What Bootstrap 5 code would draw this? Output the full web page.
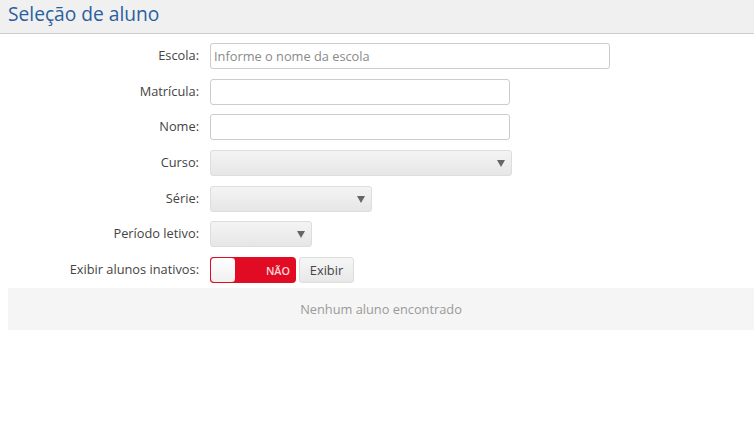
<!DOCTYPE html>
<html lang="pt-BR">
<head>
<meta charset="utf-8">
<title>Seleção de aluno</title>
<link href="https://cdn.jsdelivr.net/npm/bootstrap@5.3.0/dist/css/bootstrap.min.css" rel="stylesheet">
<style>
body { font-family: "Open Sans", sans-serif; font-size: 12.8px; color: #444; background: #fff; }
.page-head { height: 34px; background: #f0f0f0; border-bottom: 1px solid #ccc; padding: 0 8px; }
.page-head h1 { font-size: 19.2px; line-height: 28px; font-weight: 400; color: #2a5f9e; margin: 0; }
.form-stack { display: flex; flex-direction: column; gap: 9.67px; padding-top: 9px; }
.form-line { display: flex; align-items: center; height: 26px; }
.form-line label { width: 199px; text-align: right; margin: 0 11px 0 0; line-height: 25px; height: 26px; flex: none; }
.field { height: 26px; min-height: 26px; padding: 2px 3px; font-size: 12.8px; color: #444; border: 1px solid #ccc; border-radius: 3px; box-shadow: none; }
.field::placeholder { color: #8a8a8a; }
.w-400 { width: 400px; }
.w-300 { width: 300px; }
.pick { appearance: none; border: 1px solid #ddd; background-color: #eee; background-image: linear-gradient(#f4f4f4, #e6e6e6); position: relative; }
.pick::after { content: ""; position: absolute; right: 6px; top: 9px; border-left: 4.5px solid transparent; border-right: 4.5px solid transparent; border-top: 7px solid #666; }
.w-302 { width: 302px; }
.w-162 { width: 162px; }
.w-102 { width: 102px; }
.flip { width: 86px; height: 26px; background: #e10c24; border-radius: 4px; color: #fbd5da; font-size: 10.8px; font-weight: 600; line-height: 27px; text-align: right; padding-right: 6px; position: relative; flex: none; }
.flip::before { content: ""; position: absolute; left: 0; top: 0; width: 26px; height: 26px; background: linear-gradient(#fff, #f0f0f0); border: 1px solid #e10c24; border-radius: 4px; }
.go-btn { width: 55px; height: 26px; margin-left: 3px; padding: 0; font-size: 12.8px; line-height: 24px; color: #444; background: linear-gradient(#f6f6f6, #e8e8e8); border: 1px solid #ddd; border-radius: 3px; }
.empty-box { margin: 5px 0 0 8px; height: 42px; background: #f5f5f5; color: #9a9a9a; line-height: 42px; text-align: center; }
</style>
</head>
<body>
<div class="page-head"><h1>Seleção de aluno</h1></div>
<form class="form-stack">
  <div class="form-line"><label for="a">Escola:</label><input id="a" class="form-control field w-400" placeholder="Informe o nome da escola"></div>
  <div class="form-line"><label for="b">Matrícula:</label><input id="b" class="form-control field w-300"></div>
  <div class="form-line"><label for="c">Nome:</label><input id="c" class="form-control field w-300"></div>
  <div class="form-line"><label>Curso:</label><div class="field pick w-302"></div></div>
  <div class="form-line"><label>Série:</label><div class="field pick w-162"></div></div>
  <div class="form-line"><label>Período letivo:</label><div class="field pick w-102"></div></div>
  <div class="form-line"><label>Exibir alunos inativos:</label><div class="flip">NÃO</div><button type="button" class="btn go-btn">Exibir</button></div>
</form>
<div class="empty-box">Nenhum aluno encontrado</div>
<script src="https://cdn.jsdelivr.net/npm/bootstrap@5.3.0/dist/js/bootstrap.bundle.min.js"></script>
</body>
</html>
